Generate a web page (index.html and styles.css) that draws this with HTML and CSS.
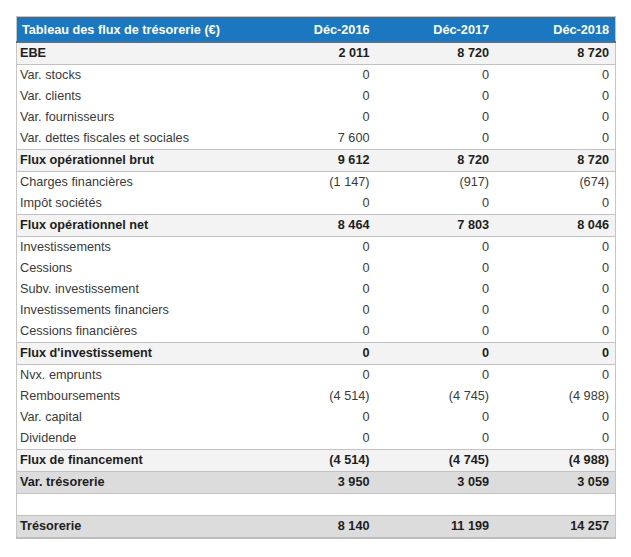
FILE: index.html
```html
<!DOCTYPE html>
<html lang="fr">
<head>
<meta charset="utf-8">
<title>Tableau des flux de trésorerie</title>
<link rel="stylesheet" href="styles.css">
</head>
<body>
<table class="cf">
  <thead>
    <tr class="head">
      <th class="lbl">Tableau des flux de trésorerie (€)</th>
      <th>Déc-2016</th>
      <th>Déc-2017</th>
      <th>Déc-2018</th>
    </tr>
  </thead>
  <tbody>
    <tr class="tot first"><td class="lbl">EBE</td><td>2 011</td><td>8 720</td><td>8 720</td></tr>
    <tr><td class="lbl">Var. stocks</td><td>0</td><td>0</td><td>0</td></tr>
    <tr><td class="lbl">Var. clients</td><td>0</td><td>0</td><td>0</td></tr>
    <tr><td class="lbl">Var. fournisseurs</td><td>0</td><td>0</td><td>0</td></tr>
    <tr><td class="lbl">Var. dettes fiscales et sociales</td><td>7 600</td><td>0</td><td>0</td></tr>
    <tr class="tot"><td class="lbl">Flux opérationnel brut</td><td>9 612</td><td>8 720</td><td>8 720</td></tr>
    <tr><td class="lbl">Charges financières</td><td>(1 147)</td><td>(917)</td><td>(674)</td></tr>
    <tr><td class="lbl">Impôt sociétés</td><td>0</td><td>0</td><td>0</td></tr>
    <tr class="tot"><td class="lbl">Flux opérationnel net</td><td>8 464</td><td>7 803</td><td>8 046</td></tr>
    <tr><td class="lbl">Investissements</td><td>0</td><td>0</td><td>0</td></tr>
    <tr><td class="lbl">Cessions</td><td>0</td><td>0</td><td>0</td></tr>
    <tr><td class="lbl">Subv. investissement</td><td>0</td><td>0</td><td>0</td></tr>
    <tr><td class="lbl">Investissements financiers</td><td>0</td><td>0</td><td>0</td></tr>
    <tr><td class="lbl">Cessions financières</td><td>0</td><td>0</td><td>0</td></tr>
    <tr class="tot"><td class="lbl">Flux d'investissement</td><td>0</td><td>0</td><td>0</td></tr>
    <tr><td class="lbl">Nvx. emprunts</td><td>0</td><td>0</td><td>0</td></tr>
    <tr><td class="lbl">Remboursements</td><td>(4 514)</td><td>(4 745)</td><td>(4 988)</td></tr>
    <tr><td class="lbl">Var. capital</td><td>0</td><td>0</td><td>0</td></tr>
    <tr><td class="lbl">Dividende</td><td>0</td><td>0</td><td>0</td></tr>
    <tr class="tot"><td class="lbl">Flux de financement</td><td>(4 514)</td><td>(4 745)</td><td>(4 988)</td></tr>
    <tr class="tot dark"><td class="lbl">Var. trésorerie</td><td>3 950</td><td>3 059</td><td>3 059</td></tr>
    <tr class="blank"><td class="lbl">&nbsp;</td><td></td><td></td><td></td></tr>
    <tr class="tot dark last"><td class="lbl">Trésorerie</td><td>8 140</td><td>11 199</td><td>14 257</td></tr>
  </tbody>
</table>
</body>
</html>
```

FILE: styles.css
```css
html, body {
  margin: 0;
  padding: 0;
  background: #ffffff;
}
body {
  padding: 16px 0 0 16px;
  font-family: "Liberation Sans", Arial, sans-serif;
  font-size: 12.7px;
}
.cf {
  width: 600px;
  border-collapse: collapse;
  border: 1px solid #c6c6c6;
  color: #3a3a3a;
}
.cf th, .cf td {
  padding: 3px 6px 3px 6px;
  line-height: 15px;
  text-align: right;
  white-space: nowrap;
}
.cf .lbl {
  text-align: left;
  padding-left: 3px;
  width: 228px;
}
.head th {
  background: #1a77c0;
  color: #ffffff;
  font-weight: bold;
  height: 18px;
  padding-top: 4px;
  padding-bottom: 2px;
  border-bottom: 2px solid #6b6b6b;
}
.head .lbl {
  padding-left: 5px;
}
.tot td {
  background: #f3f3f3;
  font-weight: bold;
  color: #1e1e1e;
  border-top: 1px solid #c2c2c2;
  border-bottom: 1px solid #c2c2c2;
}
.first td {
  border-top: none;
}
.dark td {
  background: #dcdcdc;
}
.blank td {
  height: 15px;
}
.last td {
  border-bottom: 2px solid #bdbdbd;
}
```
